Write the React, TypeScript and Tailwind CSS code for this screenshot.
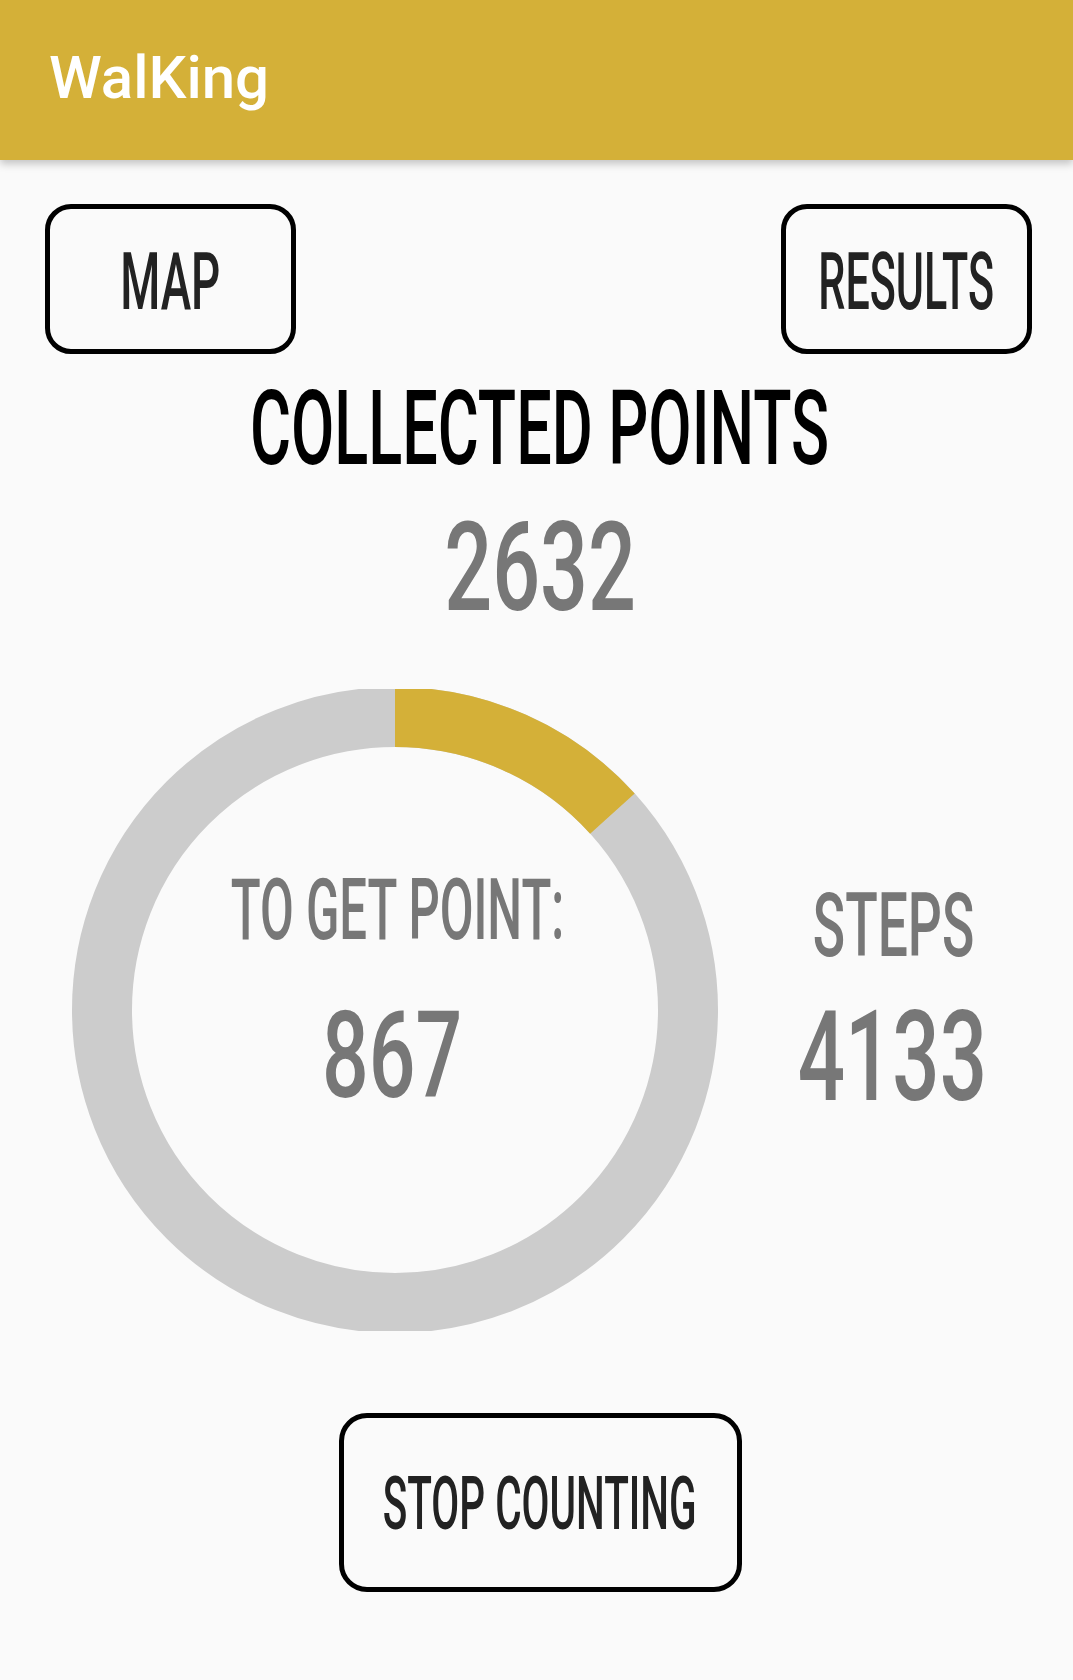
import React from 'react';

const GOLD = '#d4b038';
const RADIUS = 293;
const CIRCUMFERENCE = 2 * Math.PI * RADIUS;

// share of the ring already walked towards the next point
const progress = (1000 - 867) / 1000;

const ProgressRing = () => (
  <svg width={646} height={642} viewBox="0 0 646 642" className="block">
    <circle cx={323} cy={321} r={RADIUS} fill="none" stroke="#cccccc" strokeWidth={60} />
    <circle
      cx={323}
      cy={321}
      r={RADIUS}
      fill="none"
      stroke={GOLD}
      strokeWidth={60}
      strokeDasharray={`${progress * CIRCUMFERENCE} ${CIRCUMFERENCE}`}
      transform="rotate(-90 323 321)"
    />
  </svg>
);

export default function App() {
  return (
    <div className="min-h-[1680px] bg-[#fafafa] [font-family:Roboto,'Liberation_Sans',sans-serif]">
      {/* app bar */}
      <header className="relative z-10 h-[160px] bg-[#d4b038] pl-[49px] pt-[48px] shadow-[0_4px_8px_rgba(0,0,0,0.22)]">
        <h1 className="text-[60px] leading-none font-medium text-white">WalKing</h1>
      </header>

      <main className="pl-[7px]">
        <div className="flex justify-between pl-[38px] pr-[41px] pt-[44px]">
          <button className="flex h-[150px] w-[251px] items-center justify-center overflow-visible rounded-[26px] border-[5px] border-black pt-[6px]">
            <span className="inline-block origin-center scale-x-[0.58] whitespace-nowrap text-[79px] leading-none font-medium text-[#222]">
              MAP
            </span>
          </button>
          <button className="flex h-[150px] w-[251px] items-center justify-center overflow-visible rounded-[26px] border-[5px] border-black pt-[6px]">
            <span className="inline-block origin-center scale-x-[0.545] whitespace-nowrap text-[79px] leading-none font-medium text-[#222]">
              RESULTS
            </span>
          </button>
        </div>

        <div className="mt-[23px] flex justify-center">
          <span className="inline-block origin-center scale-x-[0.61] whitespace-nowrap text-[103px] leading-none font-medium text-black">
            COLLECTED POINTS
          </span>
        </div>
        <div className="mt-[25px] flex justify-center">
          <span className="inline-block origin-center scale-x-[0.675] whitespace-nowrap text-[125px] leading-none font-medium text-[#777]">
            2632
          </span>
        </div>
      </main>

      <section className="mt-[59px] flex">
        <div className="relative ml-[72px]">
          <ProgressRing />
          <div className="absolute inset-0 flex flex-col items-center pt-[178px] pl-[4px]">
            <span className="inline-block origin-center translate-x-[1px] scale-x-[0.57] whitespace-nowrap text-[86px] leading-none font-medium text-[#777]">
              TO GET POINT:
            </span>
            <span className="mt-[43px] inline-block origin-center -translate-x-[5px] scale-x-[0.68] whitespace-nowrap text-[121px] leading-none font-medium text-[#777]">
              867
            </span>
          </div>
        </div>
        <div className="flex flex-1 flex-col items-center pt-[192px]">
          <span className="inline-block origin-center -translate-x-[2px] scale-x-[0.6] whitespace-nowrap text-[89px] leading-none font-medium text-[#777]">
            STEPS
          </span>
          <span className="mt-[23px] inline-block origin-center -translate-x-[3px] scale-x-[0.655] whitespace-nowrap text-[127px] leading-none font-medium text-[#777]">
            4133
          </span>
        </div>
      </section>

      <div className="mt-[82px] flex justify-center pl-[7px]">
        <button className="flex h-[179px] w-[403px] items-center justify-center overflow-visible rounded-[28px] border-[5px] border-black pt-[2px]">
          <span className="inline-block origin-center scale-x-[0.54] whitespace-nowrap text-[75px] leading-none font-medium text-[#222]">
            STOP COUNTING
          </span>
        </button>
      </div>
    </div>
  );
}
